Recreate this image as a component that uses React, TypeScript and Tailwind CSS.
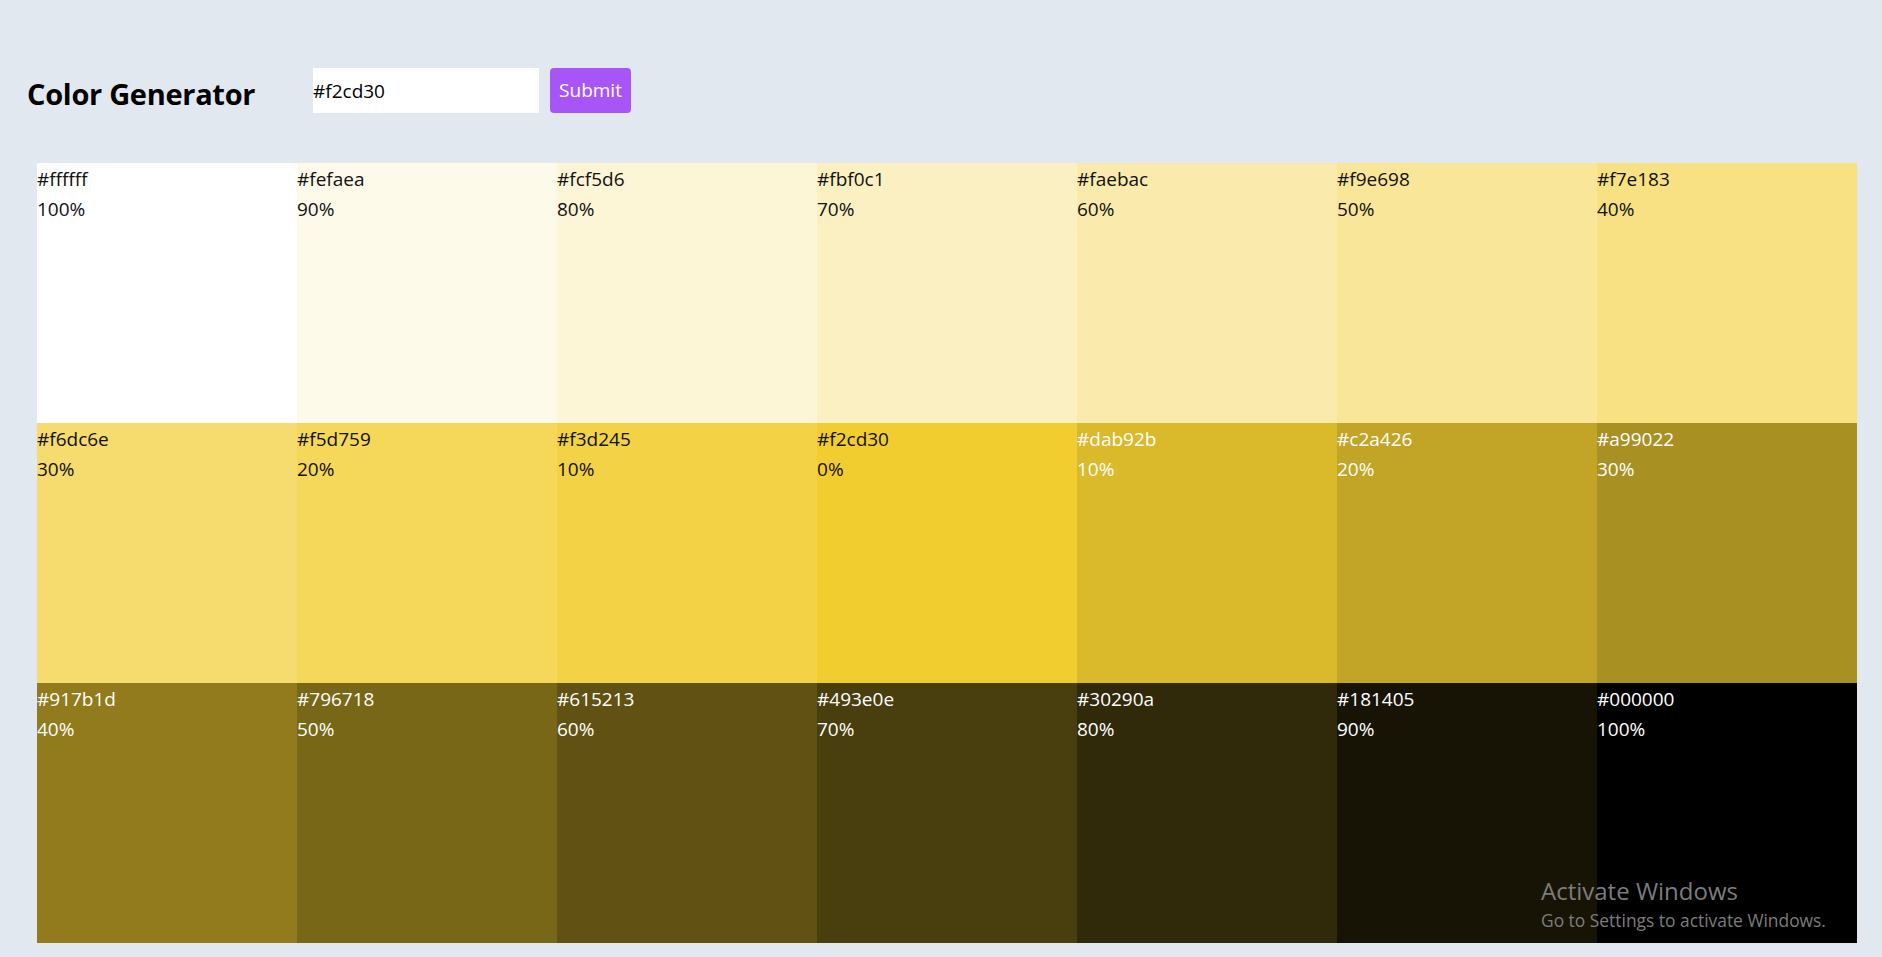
import React, { useState } from 'react';

interface Swatch {
  hex: string;
  weight: number;
  dark: boolean;
}

const tints = ['#ffffff', '#fefaea', '#fcf5d6', '#fbf0c1', '#faebac', '#f9e698', '#f7e183', '#f6dc6e', '#f5d759', '#f3d245'];
const shades = ['#dab92b', '#c2a426', '#a99022', '#917b1d', '#796718', '#615213', '#493e0e', '#30290a', '#181405', '#000000'];

const swatches: Swatch[] = [
  ...tints.map((hex, i) => ({ hex, weight: 100 - i * 10, dark: false })),
  { hex: '#f2cd30', weight: 0, dark: false },
  ...shades.map((hex, i) => ({ hex, weight: (i + 1) * 10, dark: true })),
];

const SingleColor: React.FC<Swatch> = ({ hex, weight, dark }) => {
  return (
    <article
      className={`h-[260px] text-[19px] leading-[30px] ${dark ? 'text-white' : 'text-[#111]'}`}
      style={{ background: hex }}
    >
      <p className="pt-[1px]">{hex}</p>
      <p>{weight}%</p>
    </article>
  );
};

export default function App() {
  const [color, setColor] = useState('#f2cd30');

  return (
    <main className="relative min-h-screen bg-[#e2e8f0] font-['Open_Sans','Noto_Sans',sans-serif] pt-[68px] pb-[14px]">
      <section className="flex items-center h-[45px] pl-[27px]">
        <h3 className="text-[29px] leading-[32px] font-bold text-black w-[286px] tracking-[-0.3px] mt-[7px]">Color Generator</h3>
        <form className="flex items-center gap-[11px]" onSubmit={(e) => e.preventDefault()}>
          <input
            type="text"
            value={color}
            onChange={(e) => setColor(e.target.value)}
            className="w-[226px] h-[45px] bg-white text-[19px] text-black outline-none"
          />
          <button
            type="submit"
            className="w-[81px] h-[45px] rounded-[4px] bg-[#a855f7] text-white text-[19px]"
          >
            Submit
          </button>
        </form>
      </section>

      <section className="grid grid-cols-7 w-[1820px] ml-[37px] mt-[50px]">
        {swatches.map((s, i) => (
          <SingleColor key={i} {...s} />
        ))}
      </section>

      <div className="absolute left-[1541px] top-[876px] text-[#7c7c7c] pointer-events-none">
        <p className="text-[24px] leading-[30px]">Activate Windows</p>
        <p className="text-[17.4px] leading-[24px] mt-[2px]">Go to Settings to activate Windows.</p>
      </div>
    </main>
  );
}
